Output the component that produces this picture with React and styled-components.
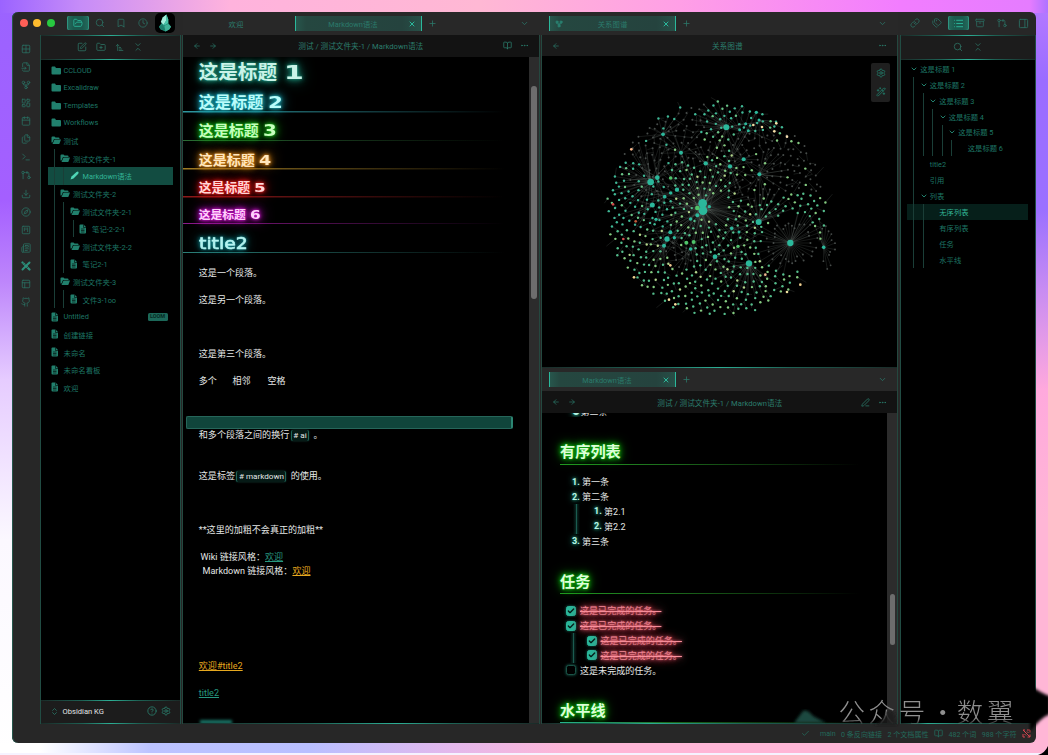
import React from "react";
import styled, { createGlobalStyle, css } from "styled-components";
import {
  FolderOpen, Search, Bookmark, Clock, X, Plus, ChevronDown, Link, Tags, List, Archive,
  GitPullRequestArrow, PanelRight, Grid2x2, FileInput, GitFork, LayoutDashboard, Calendar,
  Files, Terminal, Download, Compass, SquareKanban, Newspaper, PencilRuler, PanelsTopLeft,
  Github, SquarePen, FolderPlus, ArrowUpNarrowWide, ChevronsDownUp, ArrowLeft, ArrowRight,
  BookOpen, Ellipsis, Settings, WandSparkles, PenLine, Check, CircleHelp, ChevronsUpDown,
} from "lucide-react";

const TEAL = "#2bb89b";
const DIM = "#1d7564";

const GlobalStyle = createGlobalStyle`
  * { box-sizing: border-box; }
  html, body, #root { margin: 0; height: 755px; }
  body {
    overflow: hidden;
    font-family: Roboto, "Noto Sans CJK SC", sans-serif;
    font-size: 7.4px;
    color: ${DIM};
    background:
      linear-gradient(#f6f3ff, #f6f3ff) 0 753px / 1040px 2px no-repeat,
      linear-gradient(90deg, #fff 0, #fff 40px, #bcc3ff 150px, #b9bfff 310px, #e3b8ec 450px, #ffb6d6 570px, #ffb6d6 100%) 0 743px / 100% 12px no-repeat,
      linear-gradient(90deg, #9b63ff 0, #c68cf8 80px, #ffb3dd 230px, #ffb8d4 480px, #ff9fe6 680px, #f27dff 900px, #e57cff 1030px, #ae72ff 100%) 0 0 / 100% 13px no-repeat,
      linear-gradient(180deg, #9b63ff 0, #a45fff 200px, #bd85fb 280px, #e6ccff 380px, #fbf8ff 540px, #fff 100%) 0 0 / 20px 100% no-repeat,
      linear-gradient(180deg, #b77aff 0, #9a6cff 80px, #9a70ff 210px, #c88cf2 290px, #ffa9dd 390px, #ffb6d6 520px, #ffb6d6 100%);
  }
  svg { display: block; flex: none; }
`;

const Window = styled.div`
  width: 1024px;
  height: 731px;
  margin: 12px 0 0 12px;
  display: flex;
  flex-direction: column;
  background: #272727;
  border-radius: 6px;
  overflow: hidden;
  box-shadow: inset 1px 0 #24564b;
  float: left;
`;

const TitleBar = styled.div`
  height: 23px;
  flex: none;
  display: flex;
`;

const LeftTools = styled.div`
  width: 170.5px;
  display: flex;
  align-items: center;
  padding-left: 7.5px;
`;

const RightTools = styled(LeftTools)`
  width: 136px;
  padding-left: 6.5px;
`;

const Light = styled.span`
  width: 8.4px;
  height: 8.4px;
  flex: none;
  border-radius: 50%;
  margin: 0 5.2px 1px 0;
  background: ${(p) => p.$color};
`;

const ToolButton = styled.span`
  width: 21.6px;
  height: 14.5px;
  margin: 0 0 1px ${(p) => p.$ml || 0}px;
  flex: none;
  display: flex;
  align-items: center;
  justify-content: center;
  color: #2b6c60;
  border-radius: 2px;
  ${(p) =>
    p.$active &&
    css`
      color: ${TEAL};
      background: linear-gradient(90deg, #246d5e, #1b5a4e 30%, #1b5a4e 70%, #246d5e);
      box-shadow: inset 1px 0 #2f9480, inset -1px 0 #2f9480;
    `}
`;

const Logo = styled.span`
  width: 20px;
  height: 20px;
  flex: none;
  margin: 0 0 1px 1px;
  border-radius: 5px;
  background: #000;
  display: flex;
  align-items: center;
  justify-content: center;
`;

const Tabs = styled.div`
  width: ${(p) => p.$width}px;
  height: 23px;
  flex: none;
  display: flex;
  align-items: center;
  padding: 0 ${(p) => p.$end || 9}px 0 ${(p) => p.$indent || 0}px;
  background: #282828;
  color: #2b7a6b;
`;

const Tab = styled.div`
  width: ${(p) => p.$width}px;
  height: 15.5px;
  position: relative;
  display: flex;
  align-items: center;
  justify-content: center;
  margin-right: ${(p) => p.$mr || 0}px;
  ${(p) =>
    p.$active &&
    css`
      background: linear-gradient(90deg, #27564c, #254740 8%, #25433e 85%, #274f47);
      border-left: 1.3px solid #2bb89b;
      border-right: 1.3px solid #2bb89b;
    `}
`;

const TabLabel = styled.span`
  margin-right: ${(p) => p.$shift || 0}px;
  padding-bottom: 1px;
`;

const TabIcon = styled.span`
  position: absolute;
  ${(p) => p.$side}: 5px;
  color: ${(p) => (p.$side === "right" ? TEAL : "#2b8a78")};
`;

const Spacer = styled.span`
  flex: 1;
`;

const PlusSlot = styled.span`
  margin-left: 6px;
`;

const Body = styled.div`
  height: 689px;
  flex: none;
  display: flex;
`;

const Ribbon = styled.div`
  width: 28px;
  flex: none;
  padding-top: 5px;
  display: flex;
  flex-direction: column;
  align-items: center;
  color: #2a6d60;
`;

const RibbonItem = styled.span`
  height: 18.07px;
  display: flex;
  align-items: center;
`;

const SidePanel = styled.div`
  width: ${(p) => p.$width}px;
  margin-left: ${(p) => p.$lead || 0}px;
  margin-right: ${(p) => p.$gap || 0}px;
  flex: none;
  display: flex;
  flex-direction: column;
  background: #000;
  box-shadow: -1px 0 #214c43, 1px 0 #214c43;
`;

const Glow = styled.div`
  height: 1px;
  flex: none;
  background: linear-gradient(90deg, #1a2a27, #1d6154 ${(p) => (p.$at || 50) * 0.6}%, #2cae94 ${(p) => p.$at || 50}%, #1d6154 ${(p) => 40 + (p.$at || 50) * 0.6}%, #1a2a27);
`;

const SideHeader = styled.div`
  height: 22.7px;
  flex: none;
  display: flex;
  align-items: center;
  justify-content: center;
  gap: ${(p) => p.$gap || 9}px;
  background: #1c1c1c;
  color: #2c7061;
`;

const Tree = styled.div`
  flex: 1;
  padding: ${(p) => p.$pad};
`;

const TreeRow = styled.div`
  height: ${(p) => p.$height}px;
  display: flex;
  align-items: center;
  white-space: nowrap;
  padding-left: 3px;
  font-size: ${(p) => p.$size || 7.4}px;
  color: ${(p) => (p.$active ? "#33b597" : DIM)};
  background: ${(p) => (p.$active ? p.$activeBg : "none")};
`;

const Indent = styled.span`
  width: 9.5px;
  height: 100%;
  flex: none;
  background: linear-gradient(#1a3e37, #1a3e37) 3px 0 / 1px 100% no-repeat;
`;

const RowIcon = styled.span`
  width: ${(p) => p.$width}px;
  flex: none;
  color: #21806d;
`;

const Badge = styled.span`
  margin-left: auto;
  margin-right: 5px;
  width: 20px;
  height: 7.5px;
  border-radius: 1.5px;
  background: #1c6859;
  color: #062a23;
  font-size: 5.5px;
  font-weight: 700;
  line-height: 7.5px;
  text-align: center;
`;

const Vault = styled.div`
  height: 22.5px;
  flex: none;
  display: flex;
  align-items: center;
  padding: 0 9px 1px;
  gap: 4px;
  background: #1c1c1c;
  color: #2a7f6e;
  font-size: 7.6px;
`;

const VaultName = styled.span`
  flex: 1;
  color: #e3e6e5;
`;

const Pane = styled.div`
  width: ${(p) => p.$width}px;
  margin-right: ${(p) => p.$gap}px;
  flex: none;
  display: flex;
  flex-direction: column;
  background: #000;
  box-shadow: -1px 0 #24483f, 1px 0 #24483f;
`;

const PaneHeader = styled.div`
  height: ${(p) => p.$height || 21.5}px;
  flex: none;
  display: flex;
  align-items: center;
  padding: 0 10px;
  gap: 8px;
  background: ${(p) => p.$bg || "#131313"};
  color: #2b7d6c;
`;

const HeaderTitle = styled.span`
  flex: 1;
  text-align: center;
  font-size: 7.65px;
  white-space: pre;
  padding-left: ${(p) => p.$shift || 0}px;
`;

const Scroller = styled.div`
  flex: 1;
  min-height: 0;
  display: flex;
`;

const Document = styled.div`
  flex: 1;
  height: 100%;
  overflow: hidden;
  color: #e4e7e6;
  font-size: 9.05px;
`;

const Track = styled.div`
  width: ${(p) => p.$width || 10}px;
  background: #2c2c2c;
  padding: ${(p) => p.$top}px 2px 0 2.5px;
`;

const Thumb = styled.div`
  height: ${(p) => p.$height}px;
  border-radius: 3px;
  background: #6d6d6d;
`;

const glow = (c) => `0 0 2px ${c}, 0 0 4px ${c}, 0 0 7px ${c}, 0 0 12px ${c}`;

const Heading = styled.div`
  height: ${(p) => p.$height}px;
  display: flex;
  align-items: flex-end;
  padding: 0 0 ${(p) => p.$pad}px 15.7px;
  font-size: ${(p) => p.$size}px;
  line-height: 1;
  font-weight: 700;
  white-space: pre;
  color: ${(p) => p.$color};
  text-shadow: ${(p) => glow(p.$glow)};
  background: ${(p) =>
    p.$line
      ? `linear-gradient(90deg, ${p.$line}, ${p.$line}88 40%, transparent 93%) 0 100% / 100% 1.5px no-repeat`
      : "none"};
`;

const Numeral = styled.span`
  display: inline-block;
  margin-left: ${(p) => p.$gap || 5}px;
  font-family: "DejaVu Sans", sans-serif;
  transform: scaleX(${(p) => p.$stretch});
  transform-origin: 0 50%;
`;

const TitleLatin = styled.span`
  font-family: "DejaVu Sans", sans-serif;
  font-weight: 400;
  -webkit-text-stroke: 0.6px currentColor;
  transform: scaleX(1.14);
  transform-origin: 0 50%;
`;

const Line = styled.div`
  height: 13.57px;
  line-height: 13.57px;
  padding-left: ${(p) => p.$indent ?? 15.8}px;
  white-space: pre;
`;

const Gap = styled.span`
  display: inline-block;
  width: ${(p) => p.$w}px;
`;

const ActiveLine = styled.div`
  width: 327.5px;
  height: 13.57px;
  margin-left: 2.5px;
  border: 1px solid #26665a;
  border-left: 1.5px solid #26665a;
  border-right: 2px solid #2b8572;
  border-radius: 2px;
  background: #10453b;
`;

const Tag = styled.span`
  display: inline-block;
  height: 11px;
  line-height: 11px;
  margin: 0 2px 0 1.5px;
  padding: 0 1.5px;
  font-size: 8.1px;
  background: #061a16;
  border-left: 1px solid #1e6557;
  border-right: 1px solid #1e6557;
  border-radius: 2px;
  box-shadow: 0 0 2px #17483f;
`;

const Anchor = styled.span`
  color: ${(p) => (p.$amber ? "#e7a91f" : "#26977f")};
  text-decoration: underline;
`;

const Peek = styled.div`
  width: 32px;
  height: 4px;
  margin: 19px 0 0 17px;
  background: #1a7567;
  filter: blur(1.5px);
`;

const GraphArea = styled.div`
  height: 311px;
  flex: none;
  position: relative;
  overflow: hidden;
  padding: 33.5px 0 0 59px;
`;

const GraphControls = styled.div`
  position: absolute;
  right: 7px;
  top: 7px;
  width: 19px;
  height: 39px;
  display: flex;
  flex-direction: column;
  align-items: center;
  justify-content: space-around;
  background: #1f1f1f;
  border-radius: 2px;
  color: #227b69;
`;

const SubHeading = styled.div`
  height: 22px;
  margin: ${(p) => p.$top}px 18px 0 18.5px;
  font-size: 15.2px;
  line-height: 18px;
  font-weight: 700;
  color: #dcffd8;
  text-shadow: ${glow("#10ad10")};
  background: linear-gradient(90deg, ${(p) => p.$line || "#249a24"}, #1c6b1c 35%, transparent 97%) 0 100% / 100% 1.3px no-repeat;
`;

const ListBlock = styled.div`
  padding: 9px 0 0 ${(p) => p.$left}px;
`;

const NestedBlock = styled.div`
  width: 200px;
  margin-left: ${(p) => p.$margin}px;
  padding-left: ${(p) => p.$pad}px;
  background:
    linear-gradient(#1b5c50, #1b5c50) 3px 0 / 1px 100% no-repeat,
    linear-gradient(90deg, transparent, #0b2d27, transparent) 0 0 / 7px 100% no-repeat;
`;

const Item = styled.div`
  height: 14.85px;
  display: flex;
  align-items: center;
  white-space: pre;
`;

const Marker = styled.b`
  width: 10px;
  color: #b8f5e6;
  text-shadow: 0 0 3px ${TEAL}, 0 0 6px ${TEAL};
`;

const Box = styled.span`
  width: 10px;
  height: 10px;
  margin-right: 4px;
  border-radius: 2.5px;
  border: 1px solid ${(p) => (p.$done ? TEAL : "#1b5347")};
  background: ${(p) => (p.$done ? TEAL : "#000")};
  color: #04211b;
  display: flex;
  align-items: center;
  justify-content: center;
  box-shadow: 0 0 3px #1b7362;
`;

const Done = styled.span`
  color: #fb929e;
  text-decoration: line-through;
  text-shadow: 0 0 2px #e05a6c, 0 0 5px #c14a5a, 0 0 9px #a8404e, 0 0 14px #7a2f3a;
`;

const ClippedItem = styled.div`
  height: 3.5px;
  overflow: hidden;
  padding-left: 29px;
  line-height: 14px;
`;

const Clipped = styled.div`
  display: flex;
  transform: translateY(-8.5px);
  white-space: pre;
`;

const Bullet = styled(Marker)`
  width: 8px;
  margin-left: 2px;
  font-size: 7px;
`;

const StatusBar = styled.div`
  height: 19px;
  flex: none;
  display: flex;
  align-items: center;
  justify-content: flex-end;
  padding-right: 5px;
  gap: 5.5px;
  font-size: 7.05px;
  color: #23695b;
`;

const StatusText = styled.span`
  white-space: pre;
  margin-left: ${(p) => p.$ml || 0}px;
`;

const Overlay = styled.div`
  position: absolute;
  left: 790px;
  top: 680px;
  width: 258px;
  height: 75px;
`;

const Watermark = styled.div`
  position: absolute;
  left: 48.5px;
  top: 12px;
  height: 38px;
  font-family: "Noto Sans CJK SC", sans-serif;
  font-weight: 300;
  font-size: 26.5px;
  line-height: 38px;
  letter-spacing: 3.6px;
  color: #8f8f8f;
  white-space: pre;
  mask-image: linear-gradient(#000 70%, transparent 88%);
`;

const Dot = styled.span`
  display: inline-block;
  width: 28px;
  text-align: center;
  letter-spacing: 0;
`;

const Smudges = styled.svg`
  position: absolute;
  left: 0;
  top: 0;
`;

const FilledFolder = ({ open }) => (
  <svg width="10.5" height="9" viewBox="0 0 21 18" fill="currentColor">
    {open ? (
      <path d="M1 3a2 2 0 0 1 2-2h4l2 2h6a2 2 0 0 1 2 2v1H6L3 13H1zM7 7h13l-3 8a2 2 0 0 1-2 1H3z" />
    ) : (
      <path d="M1 3a2 2 0 0 1 2-2h5l2 3h8a2 2 0 0 1 2 2v9a2 2 0 0 1-2 2H3a2 2 0 0 1-2-2z" />
    )}
  </svg>
);

const FilledFile = () => (
  <svg width="8" height="10" viewBox="0 0 16 20">
    <path d="M3 1h6l5 5v11a2 2 0 0 1-2 2H3a2 2 0 0 1-2-2V3a2 2 0 0 1 2-2z" fill="currentColor" />
    <path d="M9 1v6h5M4 10h7M4 13h7M4 16h7" stroke="#000" strokeWidth="1.2" fill="none" />
  </svg>
);

const PenIcon = () => (
  <svg width="9" height="9" viewBox="0 0 18 18" fill="#4fd6b6">
    <path d="M1 17l2-6L13 2q3-2 4 0t-2 5L7 15z" />
  </svg>
);

const Gem = () => (
  <svg width="14" height="18" viewBox="0 0 15 18">
    <path d="M5 3l4-3 2 5 0 4 3 4-2 3-4 2-5-2-2-3 3-4z" fill="#238f7a" />
    <path d="M5 3l4-3 0 6-3 5-3-3z" fill="#a5eedc" />
    <path d="M9 0l2 5 0 4-3 2-2 0 3-5z" fill="#4cc6ab" />
    <path d="M1 13l4-2 3 6-5-1z" fill="#1c7f6c" />
    <path d="M7 12l4-2 3 3-2 3-4 2z" fill="#3fb297" />
  </svg>
);

/* crossed pencil and ruler, drawn solid */
const CrossedTools = () => (
  <svg width="10" height="10" viewBox="0 0 20 20" stroke="#2c8f7b" strokeLinecap="round">
    <path d="M3 3l14 14" strokeWidth="4.5" />
    <path d="M17 3L3 17" strokeWidth="4" />
    <path d="M6 3l-2 2M9 6L7 8M14 12l-2 2" stroke="#272727" strokeWidth="1.3" />
  </svg>
);

const hubs = [
  [305, 340, 13], [306, 362, 13], [149, 276, 10], [169, 263, 7], [376, 112, 9], [568, 459, 9.5],
  [444, 520, 9.5], [473, 396, 9], [342, 500, 7], [198, 447, 8], [154, 345, 7.5], [240, 188, 6],
  [186, 133, 5.5], [314, 220, 6.5], [387, 229, 6.5], [428, 208, 6], [475, 253, 6], [228, 299, 6.5],
  [208, 427, 6], [189, 467, 6], [220, 443, 5], [269, 477, 5.5], [256, 458, 6, 1], [278, 456, 6, 1],
  [289, 354, 7, 1], [289, 376, 6], [325, 350, 5], [269, 387, 5.5], [392, 415, 5.5], [414, 426, 4.5],
  [668, 472, 5.5], [466, 67, 5], [474, 90, 4.5], [434, 101, 4.5], [416, 119, 4.5], [442, 122, 4.5],
  [209, 264, 5.5, 1], [209, 309, 5.5], [191, 320, 5.5], [165, 388, 5], [411, 469, 5, 1],
];

const accents = [
  [457, 105, "#f3d9a0"], [483, 111, "#f3d9a0"], [520, 124, "#f6e0a8"], [526, 100, "#f6e0a8"], [558, 140, "#f3dcb0"],
  [91, 178, "#ffb98c"], [36, 343, "#d04848"], [67, 447, "#d05050"], [104, 394, "#c05a3a"], [99, 562, "#f0d090"],
  [204, 629, "#f3dc9c"], [223, 643, "#f3dc9c"], [208, 526, "#f0c890"], [493, 554, "#f0b890"], [598, 584, "#f0d090"], [558, 606, "#f0e0a0"],
];

function buildGraph() {
  let seed = 41;
  const rnd = () => {
    seed = (seed * 1103515245 + 12345) % 2147483648;
    return seed / 2147483648;
  };
  const near = (x, y, hx, hy) => Math.hypot(x - hx, y - hy);
  const nodes = [];
  const edges = [];
  for (let i = 12; i < 800; i++) {
    const a = i * 2.399963;
    const r = 11.6 * Math.sqrt(i);
    const x = 346 + r * Math.cos(a) + (rnd() - 0.5) * 8;
    const y = 357 + r * 0.98 * Math.sin(a) + (rnd() - 0.5) * 8;
    if (hubs.some((h) => near(x, y, h[0], h[1]) < h[2] + 5)) continue;
    if (near(x, y, 568, 459) < 85) continue;
    const gray =
      (x < 310 && y < 215) || (x > 440 && y < 310 && y > 130) || near(x, y, 475, 253) < 85 ||
      (near(x, y, 149, 276) < 65 && rnd() < 0.6) || near(x, y, 235, 490) < 45 || (y > 130 && y < 200 && rnd() < 0.6);
    let color = "#54bd8c";
    const k = rnd();
    if (gray && k > 0.12) color = "#474c4a";
    else if (y < 130 || (x < 210 && y < 420)) color = k < 0.75 ? "#3fb795" : "#69c487";
    else if (k < 0.3) color = "#84ca80";
    else if (k < 0.35) color = "#b2d58c";
    nodes.push([x, y, color === "#474c4a" ? 3 : 3.6, color]);
    const reach = hubs.filter((h) => near(x, y, h[0], h[1]) < 45 + h[2] * 8);
    const hub = reach[Math.floor(rnd() * reach.length)];
    if (hub && rnd() < 0.85) edges.push([x, y, hub[0], hub[1]]);
    if (rnd() < 0.35) edges.push([x, y, x + (rnd() - 0.5) * 55, y + (rnd() - 0.5) * 55]);
  }
  for (let i = 0; i < 34; i++) {
    const a = (i / 34) * Math.PI * 2;
    const r = 45 + rnd() * 38;
    const x = 568 + r * Math.cos(a);
    const y = 459 + r * Math.sin(a);
    nodes.push([x, y, 3, "#474c4a"]);
    edges.push([x, y, 568, 459]);
  }
  for (let i = 0; i < 12; i++) {
    const a = -1.7 + i * 0.3;
    const r = 30 + rnd() * 38;
    const x = Math.min(702, 668 + r * 0.6 * Math.cos(a));
    const y = 472 + r * Math.sin(a);
    nodes.push([x, y, 2.8, "#474c4a"]);
    edges.push([x, y, 668, 472]);
  }
  for (let i = 0; i < 90; i++) {
    const a = i * 0.07;
    const r = 60 + rnd() * 130;
    edges.push([305 + r * Math.cos(a), 355 + r * Math.sin(a), 305, 352]);
  }
  hubs.slice(2).forEach((h, i) => {
    if (i % 2) edges.push([h[0], h[1], 305, 352]);
  });
  return { nodes, edges };
}

const graph = buildGraph();

const GraphView = () => (
  <svg width="240" height="240" viewBox="0 0 720 720">
    <g stroke="#8b9a95" strokeOpacity="0.28" strokeWidth="1.7">
      {graph.edges.map((e, i) => (
        <line key={i} x1={e[0]} y1={e[1]} x2={e[2]} y2={e[3]} />
      ))}
    </g>
    {graph.nodes.map((n, i) => (
      <circle key={i} cx={n[0]} cy={n[1]} r={n[2]} fill={n[3]} />
    ))}
    {accents.map((n, i) => (
      <circle key={i} cx={n[0]} cy={n[1]} r="4" fill={n[2]} />
    ))}
    {hubs.map((h, i) => (
      <circle key={i} cx={h[0]} cy={h[1]} r={h[2]} fill={h[3] ? "#4fc46a" : "#2bb89b"} />
    ))}
  </svg>
);

const ribbonTop = [
  Grid2x2, FileInput, GitFork, LayoutDashboard, Calendar, Files, Terminal, GitPullRequestArrow,
  Download, Compass, SquareKanban, Newspaper,
];
const ribbonBottom = [PanelsTopLeft, Github];

const files = [
  [0, "folder", "CCLOUD"], [0, "folder", "Excalidraw"], [0, "folder", "Templates"], [0, "folder", "Workflows"],
  [0, "open", "测试"], [1, "open", "测试文件夹-1"], [2, "pen", "Markdown语法"], [1, "open", "测试文件夹-2"],
  [2, "open", "测试文件夹-2-1"], [3, "file", "笔记-2-2-1"], [2, "open", "测试文件夹-2-2"], [2, "file", "笔记2-1"],
  [1, "open", "测试文件夹-3"], [2, "file", "文件3-1oo"], [0, "file", "Untitled", "LOOM"], [0, "file", "创建链接"],
  [0, "file", "未命名"], [0, "file", "未命名看板"], [0, "file", "欢迎"],
];

const outline = [
  [0, "这是标题 1", 1], [1, "这是标题 2", 1], [2, "这是标题 3", 1], [3, "这是标题 4", 1], [4, "这是标题 5", 1],
  [5, "这是标题 6"], [1, "title2"], [1, "引用"], [1, "列表", 1], [2, "无序列表"], [2, "有序列表"], [2, "任务"], [2, "水平线"],
];

const rowIcon = {
  folder: <FilledFolder />,
  open: <FilledFolder open />,
  file: <FilledFile />,
  pen: <PenIcon />,
};

/* level, size, height, bottom padding, colour, glow, rule, digit gap, digit stretch */
const headings = [
  [1, 19.6, 26, 0, "#c9f3e8", "#198873", null, 7, 1.45],
  [2, 16.2, 30, 1, "#b9fbfa", "#1ba3b0", "#2f97a0", 5, 1.32],
  [3, 15, 28.5, 2, "#c6ffbd", "#15a815", "#2c6b35", 4, 1.32],
  [4, 14, 28.5, 2.5, "#ffe6bd", "#c97a16", "#a07c24", 4, 1.25],
  [5, 12.9, 28, 2.5, "#ffd7d7", "#dd1717", "#8e1a1a", 4, 1.3],
  [6, 11.8, 26.7, 2, "#ffd2fb", "#c814c8", "#8c1a8c", 4, 1.3],
];

const I = ({ of: Icon, s = 9, w = 2 }) => <Icon size={s} strokeWidth={w} />;

const blank = (n) => Array.from({ length: n }, (_, i) => <Line key={i} />);

const DoneTask = () => (
  <Item>
    <Box $done><I of={Check} s={8} w={4} /></Box>
    <Done>这是已完成的任务。</Done>
  </Item>
);

export default function App() {
  return (
    <>
      <GlobalStyle />
      <Window>
        <TitleBar>
          <LeftTools>
            <Light $color="#ff5f57" />
            <Light $color="#febc2e" />
            <Light $color="#28c840" />
            <ToolButton $active $ml={7}><I of={FolderOpen} s={10} /></ToolButton>
            <ToolButton><I of={Search} s={10} /></ToolButton>
            <ToolButton><I of={Bookmark} s={10} /></ToolButton>
            <ToolButton><I of={Clock} s={10} /></ToolButton>
            <Logo><Gem /></Logo>
          </LeftTools>
          <Tabs $width={359} $end={12.5}>
            <Tab $width={107} $mr={5}><TabLabel>欢迎</TabLabel></Tab>
            <Tab $width={127} $active>
              <TabLabel $shift={10}>Markdown语法</TabLabel>
              <TabIcon $side="right"><I of={X} s={8} w={3} /></TabIcon>
            </Tab>
            <PlusSlot><I of={Plus} /></PlusSlot>
            <Spacer />
            <I of={ChevronDown} />
          </Tabs>
          <Tabs $width={356.5} $indent={7.5} $end={11}>
            <Tab $width={127} $active>
              <TabIcon $side="left"><I of={GitFork} s={8} w={3} /></TabIcon>
              <TabLabel>关系图谱</TabLabel>
              <TabIcon $side="right"><I of={X} s={8} w={3} /></TabIcon>
            </Tab>
            <PlusSlot><I of={Plus} /></PlusSlot>
            <Spacer />
            <I of={ChevronDown} />
          </Tabs>
          <RightTools>
            <ToolButton><I of={Link} s={10} /></ToolButton>
            <ToolButton><I of={Tags} s={10} /></ToolButton>
            <ToolButton $active><I of={List} s={11} /></ToolButton>
            <ToolButton><I of={Archive} s={10} /></ToolButton>
            <ToolButton><I of={GitPullRequestArrow} s={10} /></ToolButton>
            <ToolButton><I of={PanelRight} s={11} /></ToolButton>
          </RightTools>
        </TitleBar>

        <Body>
          <Ribbon>
            {ribbonTop.map((icon, i) => (
              <RibbonItem key={i}><I of={icon} s={10} /></RibbonItem>
            ))}
            <RibbonItem><CrossedTools /></RibbonItem>
            {ribbonBottom.map((icon, i) => (
              <RibbonItem key={i}><I of={icon} s={10} /></RibbonItem>
            ))}
          </Ribbon>

          <SidePanel $width={139} $lead={0.5} $gap={3.5}>
            <Glow />
            <SideHeader>
              <I of={SquarePen} s={10} />
              <I of={FolderPlus} s={10} />
              <I of={ArrowUpNarrowWide} />
              <I of={ChevronsDownUp} s={10} />
            </SideHeader>
            <Glow />
            <Tree $pad="1.5px 7px 0">
              {files.map(([depth, kind, name, badge]) => (
                <TreeRow key={name} $height={17.63} $active={kind === "pen"} $activeBg="#124c41">
                  {Array.from({ length: depth }, (_, i) => <Indent key={i} />)}
                  <RowIcon $width={13}>{rowIcon[kind]}</RowIcon>
                  {name}
                  {badge && <Badge>{badge}</Badge>}
                </TreeRow>
              ))}
            </Tree>
            <Glow />
            <Vault>
              <I of={ChevronsUpDown} s={9} />
              <VaultName>Obsidian KG</VaultName>
              <I of={CircleHelp} s={10} />
              <I of={Settings} s={10} />
            </Vault>
            <Glow />
          </SidePanel>

          <Pane $width={355.5} $gap={3}>
            <PaneHeader>
              <I of={ArrowLeft} s={8} />
              <I of={ArrowRight} s={8} />
              <HeaderTitle $shift={2}>测试 / 测试文件夹-1 / Markdown语法</HeaderTitle>
              <I of={BookOpen} />
              <I of={Ellipsis} />
            </PaneHeader>
            <Scroller>
              <Document>
                {headings.map(([n, size, h, pad, color, g, line, gap, stretch]) => (
                  <Heading key={n} $size={size} $height={h} $pad={pad} $color={color} $glow={g} $line={line}>
                    这是标题<Numeral $gap={gap} $stretch={stretch}>{n}</Numeral>
                  </Heading>
                ))}
                <Heading $size={16.5} $height={28.9} $pad={1} $color="#b4f3f0" $glow="#189ba3" $line="#2c8079">
                  <TitleLatin>title2</TitleLatin>
                </Heading>
                {blank(1)}
                <Line>这是一个段落。</Line>
                {blank(1)}
                <Line>这是另一个段落。</Line>
                {blank(3)}
                <Line>这是第三个段落。</Line>
                {blank(1)}
                <Line>多个<Gap $w={15.5} />相邻<Gap $w={17} />空格</Line>
                {blank(2)}
                <ActiveLine />
                <Line>和多个段落之间的换行<Tag># ai</Tag> 。</Line>
                {blank(2)}
                <Line>这是标签<Tag># markdown</Tag> 的使用。</Line>
                {blank(3)}
                <Line>**这里的加粗不会真正的加粗**</Line>
                {blank(1)}
                <Line $indent={17.5}>Wiki 链接风格：<Anchor>欢迎</Anchor></Line>
                <Line $indent={19.5}>Markdown 链接风格：<Anchor $amber>欢迎</Anchor></Line>
                {blank(6)}
                <Line><Anchor $amber>欢迎#title2</Anchor></Line>
                {blank(1)}
                <Line><Anchor>title2</Anchor></Line>
                <Peek />
              </Document>
              <Track $top={29.5}><Thumb $height={213} /></Track>
            </Scroller>
            <Glow $at={60} />
          </Pane>

          <Pane $width={355.5} $gap={3.5}>
            <PaneHeader $bg="#1a1a1a" $height={21}>
              <I of={ArrowLeft} s={8} />
              <HeaderTitle $shift={17}>关系图谱</HeaderTitle>
              <I of={Ellipsis} />
            </PaneHeader>
            <GraphArea>
              <GraphView />
              <GraphControls>
                <I of={Settings} s={10} />
                <I of={WandSparkles} s={10} />
              </GraphControls>
            </GraphArea>
            <Glow />
            <Tabs $width={355.5} $indent={7} $end={10}>
              <Tab $width={127} $active>
                <TabLabel $shift={10}>Markdown语法</TabLabel>
                <TabIcon $side="right"><I of={X} s={8} w={3} /></TabIcon>
              </Tab>
              <PlusSlot><I of={Plus} /></PlusSlot>
              <Spacer />
              <I of={ChevronDown} />
            </Tabs>
            <PaneHeader $height={22}>
              <I of={ArrowLeft} s={8} />
              <I of={ArrowRight} s={8} />
              <HeaderTitle $shift={3}>测试 / 测试文件夹-1 / Markdown语法</HeaderTitle>
              <I of={PenLine} />
              <I of={Ellipsis} />
            </PaneHeader>
            <Scroller>
              <Document>
                <ClippedItem>
                  <Clipped><Bullet>●</Bullet>第三条</Clipped>
                </ClippedItem>
                <SubHeading $top={26.8}>有序列表</SubHeading>
                <ListBlock $left={30.5}>
                  <Item><Marker>1.</Marker>第一条</Item>
                  <Item><Marker>2.</Marker>第二条</Item>
                  <NestedBlock $margin={1} $pad={21}>
                    <Item><Marker>1.</Marker>第2.1</Item>
                    <Item><Marker>2.</Marker>第2.2</Item>
                  </NestedBlock>
                  <Item><Marker>3.</Marker>第三条</Item>
                </ListBlock>
                <SubHeading $top={24}>任务</SubHeading>
                <ListBlock $left={24.5}>
                  <DoneTask />
                  <DoneTask />
                  <NestedBlock $margin={4} $pad={16.5}>
                    <DoneTask />
                    <DoneTask />
                  </NestedBlock>
                  <Item><Box />这是未完成的任务。</Item>
                </ListBlock>
                <SubHeading $top={24} $line={TEAL}>水平线</SubHeading>
              </Document>
              <Track $top={181}><Thumb $height={51} /></Track>
            </Scroller>
            <Glow $at={30} />
          </Pane>

          <SidePanel $width={134}>
            <Glow />
            <SideHeader $gap={10}>
              <I of={Search} s={10} />
              <I of={ChevronsDownUp} s={10} />
            </SideHeader>
            <Glow />
            <Tree $pad="1.2px 7px 0 6.8px">
              {outline.map(([depth, name, open]) => (
                <TreeRow key={name} $height={15.92} $size={7.3} $active={name === "无序列表"} $activeBg="#061f1a">
                  {Array.from({ length: depth }, (_, i) => <Indent key={i} />)}
                  <RowIcon $width={10}>{open && <I of={ChevronDown} s={8} w={3} />}</RowIcon>
                  {name}
                </TreeRow>
              ))}
            </Tree>
            <Glow $at={20} />
          </SidePanel>
        </Body>

        <StatusBar>
          <I of={Check} />
          <StatusText $ml={4}>main</StatusText>
          <StatusText>0 条反向链接</StatusText>
          <StatusText>2 个文档属性</StatusText>
          <I of={BookOpen} />
          <StatusText>482 个词</StatusText>
          <StatusText>988 个字符</StatusText>
          <svg width="9" height="9" viewBox="0 0 18 18" fill="none" stroke="#d8444e" strokeWidth="2">
            <path d="M2 2h4M10 2h6v5M16 11v5h-5M6 16H2v-6M2 2l14 14M5 10l3 3M10 5l3 3" />
          </svg>
        </StatusBar>
      </Window>
      <Overlay>
        <Watermark>公众号<Dot>·</Dot>数翼</Watermark>
        <Smudges width="258" height="75" viewBox="0 0 258 75">
          <defs>
            <filter id="soft"><feGaussianBlur stdDeviation="1.6" /></filter>
          </defs>
          <path d="M4 43 13 31Q17 29 23 36L36 43Q20 43 4 43Z" fill="#1d4a40" filter="url(#soft)" />
          <path d="M84 45q8-3 12-12 4-6 9 1l2 11z" fill="#1e1e1e" opacity="0.85" filter="url(#soft)" />
          <path d="M240 5Q252 14 260 16V34Q250 38 240 52Z" fill="#000" filter="url(#soft)" />
          <path d="M258 66v9h-10q7-2 10-9z" fill="#000" />
        </Smudges>
      </Overlay>
    </>
  );
}
